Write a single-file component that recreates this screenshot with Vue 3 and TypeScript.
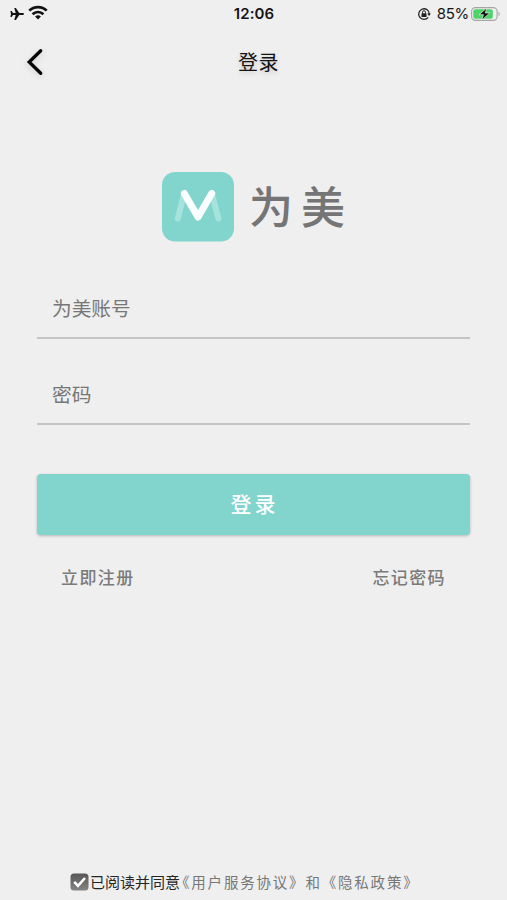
<script setup lang="ts">
import { ref } from 'vue'

const account = ref('')
const password = ref('')
const agreed = ref(true)
</script>

<template>
  <main class="screen">
    <div class="status">
      <div class="status-left">
        <svg class="plane" width="14" height="14" viewBox="0 0 14 14">
          <path d="M14 7c0-.8-.8-1.100-1.600-1.100H9.200L5.900.9H4.300l1.400 5H3L1.700 4.100H.4L1 7l-.6 2.900h1.300L3 8.100h2.700l-1.400 5h1.600l3.300-5h3.200c.8 0 1.600-.3 1.600-1.100z" fill="#111" />
        </svg>
        <svg width="20" height="15" viewBox="0 0 20 15" fill="none" stroke="#111" stroke-width="2.700">
          <path d="M1.300 5.600a12.500 12.500 0 0 1 17.400 0" />
          <path d="M4.600 9.200a7.700 7.700 0 0 1 10.800 0" />
          <path d="M7.100 11.600a4.100 4.100 0 0 1 5.800 0L10 14.500z" fill="#111" stroke="none" />
        </svg>
      </div>
      <time class="clock">12:06</time>
      <div class="status-right">
        <svg class="lock" width="14" height="14" viewBox="0 0 14 14" fill="none" stroke="#222">
          <path d="M11.200 10.300A5.300 5.300 0 1 1 12.300 7" stroke-width="1.300" />
          <path d="M10.100 6.500h3.800L12 9z" fill="#222" stroke="none" />
          <rect x="4.500" y="6.300" width="5" height="3.700" rx=".5" fill="#222" stroke="none" />
          <path d="M5.500 6.500V5.300a1.500 1.500 0 0 1 3 0v1.200" />
        </svg>
        <span class="percent">85%</span>
        <svg width="30" height="14" viewBox="0 0 30 14">
          <rect x=".6" y=".6" width="25.500" height="12.800" rx="3.800" fill="none" stroke="#a5a5a5" stroke-width="1.100" />
          <rect x="2.300" y="2.300" width="19.500" height="9.400" rx="2" fill="#4bd468" />
          <path d="M27.500 4.800c1.600.5 1.600 3.900 0 4.400z" fill="#aaa" />
          <path d="M16 .8 8 7.700h4.400L10.800 13.200l8-7.300h-4.500z" fill="#111" stroke="#eefbef" stroke-width=".7" />
        </svg>
      </div>
    </div>

    <header class="nav">
      <button class="back" type="button" aria-label="返回">
        <svg width="20" height="30" viewBox="0 0 20 30">
          <path d="M15.700 3.700 4.200 15l11.500 11.300" fill="none" stroke="#050505" stroke-width="3.300" stroke-linecap="round" stroke-linejoin="miter" />
        </svg>
      </button>
      <h1 class="title">登录</h1>
    </header>

    <div class="brand">
      <svg class="logo" width="72" height="70" viewBox="0 0 72 70">
        <rect width="72" height="69.500" rx="13" fill="#81d5cc" />
        <g fill="none" stroke-linecap="round" stroke-linejoin="round">
          <path d="M21.500 24 15.800 46.500M50.500 24l5.900 22.500" stroke="#a5e3dc" stroke-width="6" />
          <path d="M22.300 21.500 36 45 49.700 21.500" stroke="#fbffff" stroke-width="7" />
        </g>
      </svg>
      <span class="wordmark">为美</span>
    </div>

    <form class="form" @submit.prevent>
      <input v-model="account" class="field" type="text" placeholder="为美账号" />
      <input v-model="password" class="field second" type="password" placeholder="密码" />
      <button class="submit" type="submit">登录</button>
      <div class="links">
        <a>立即注册</a>
        <a>忘记密码</a>
      </div>
    </form>

    <footer class="terms">
      <button class="check" type="button" role="checkbox" :aria-checked="agreed" @click="agreed = !agreed">
        <svg width="19" height="18" viewBox="0 0 19 18">
          <defs>
            <linearGradient id="boxfill" x1="0" y1="0" x2="0" y2="1">
              <stop offset="0" stop-color="#565656" />
              <stop offset="1" stop-color="#858585" />
            </linearGradient>
          </defs>
          <rect x=".5" y=".5" width="18" height="17" rx="3.500" fill="url(#boxfill)" />
          <path v-if="agreed" d="m4.200 8.800 3.800 4 7-7.800" fill="none" stroke="#fff" stroke-width="2.600" />
        </svg>
      </button>
      <span class="agree">已阅读并同意</span>
      <span class="docs">《用户服务协议》和《隐私政策》</span>
    </footer>
  </main>
</template>

<style>
body {
  background: #efefef;
}
</style>

<style scoped>
.screen {
  display: flex;
  flex-direction: column;
  box-sizing: border-box;
  width: 100%;
  height: 900px;
  overflow: hidden;
  background: #efefef;
  font-family: Inter, "Noto Sans CJK SC", sans-serif;
}

button {
  padding: 0;
  border: 0;
  background: none;
  font-family: inherit;
}

svg {
  display: block;
}

.status {
  display: grid;
  grid-template-columns: 1fr auto 1fr;
  align-items: center;
  height: 27px;
  padding: 0 6px 0 10px;
  color: #151515;
}

.status-left,
.status-right {
  display: flex;
  align-items: center;
}

.status-left {
  gap: 4px;
}

.status-left svg:last-child {
  margin-top: -3px;
}

.status-right {
  justify-content: flex-end;
}

.clock {
  margin-right: 3px;
  font-size: 15px;
  font-weight: 600;
  letter-spacing: 0.1px;
}

.percent {
  margin: 0 2px 0 6px;
  font-size: 15px;
  letter-spacing: -0.300px;
}

.nav {
  display: grid;
  grid-template-columns: 1fr auto 1fr;
  align-items: center;
  height: 70px;
  padding: 0 20px 0 25px;
}

.back {
  width: 20px;
  filter: drop-shadow(0 2px 3px rgba(0, 0, 0, 0.14));
}

.title {
  margin: 1px 0 0 5px;
  color: #151515;
  font-size: 20px;
  font-weight: 400;
  line-height: 30px;
  letter-spacing: 0.5px;
  text-shadow: 0 2px 5px rgba(0, 0, 0, 0.16);
}

.brand {
  display: flex;
  align-items: center;
  height: 70px;
  margin-top: 75px;
  padding-left: 162px;
}

.wordmark {
  margin: 0 0 4px 15px;
  color: #757575;
  font-family: "Noto Sans CJK SC", sans-serif;
  font-size: 44px;
  font-weight: 500;
  line-height: 66px;
  letter-spacing: 8px;
}

.form {
  display: flex;
  flex-direction: column;
  margin: 38px 37px 0;
}

.field {
  box-sizing: border-box;
  height: 59px;
  padding: 0 15px 2px;
  border: 0;
  border-bottom: 2px solid #c4c4c4;
  border-radius: 0;
  outline: 0;
  background: transparent;
  color: #333;
  font-family: "Noto Sans CJK SC", sans-serif;
  font-size: 19.700px;
}

.field::placeholder {
  color: #777;
  opacity: 1;
}

.second {
  margin-top: 27px;
}

.submit {
  height: 61px;
  margin-top: 49px;
  padding: 0 0 3px 2px;
  border-radius: 4px;
  background: #81d5cc;
  box-shadow: 0 1px 3px rgba(0, 0, 0, 0.24);
  color: #fff;
  font-size: 21px;
  font-weight: 500;
  letter-spacing: 3px;
}

.links {
  display: flex;
  justify-content: space-between;
  margin-top: 30px;
  padding: 0 24px;
  color: #7a7a7a;
  font-size: 17px;
  font-weight: 500;
  line-height: 26px;
  letter-spacing: 1.400px;
}

.terms {
  display: flex;
  align-items: center;
  height: 36px;
  margin-top: auto;
  padding-left: 70px;
  font-family: "Noto Sans CJK SC", sans-serif;
  white-space: nowrap;
}

.agree {
  margin: 0 0 2px 1px;
  color: #252525;
  font-size: 15px;
}

.docs {
  margin: 0 0 2px -5px;
  color: #777;
  font-size: 14.500px;
  letter-spacing: 1.800px;
}
</style>
